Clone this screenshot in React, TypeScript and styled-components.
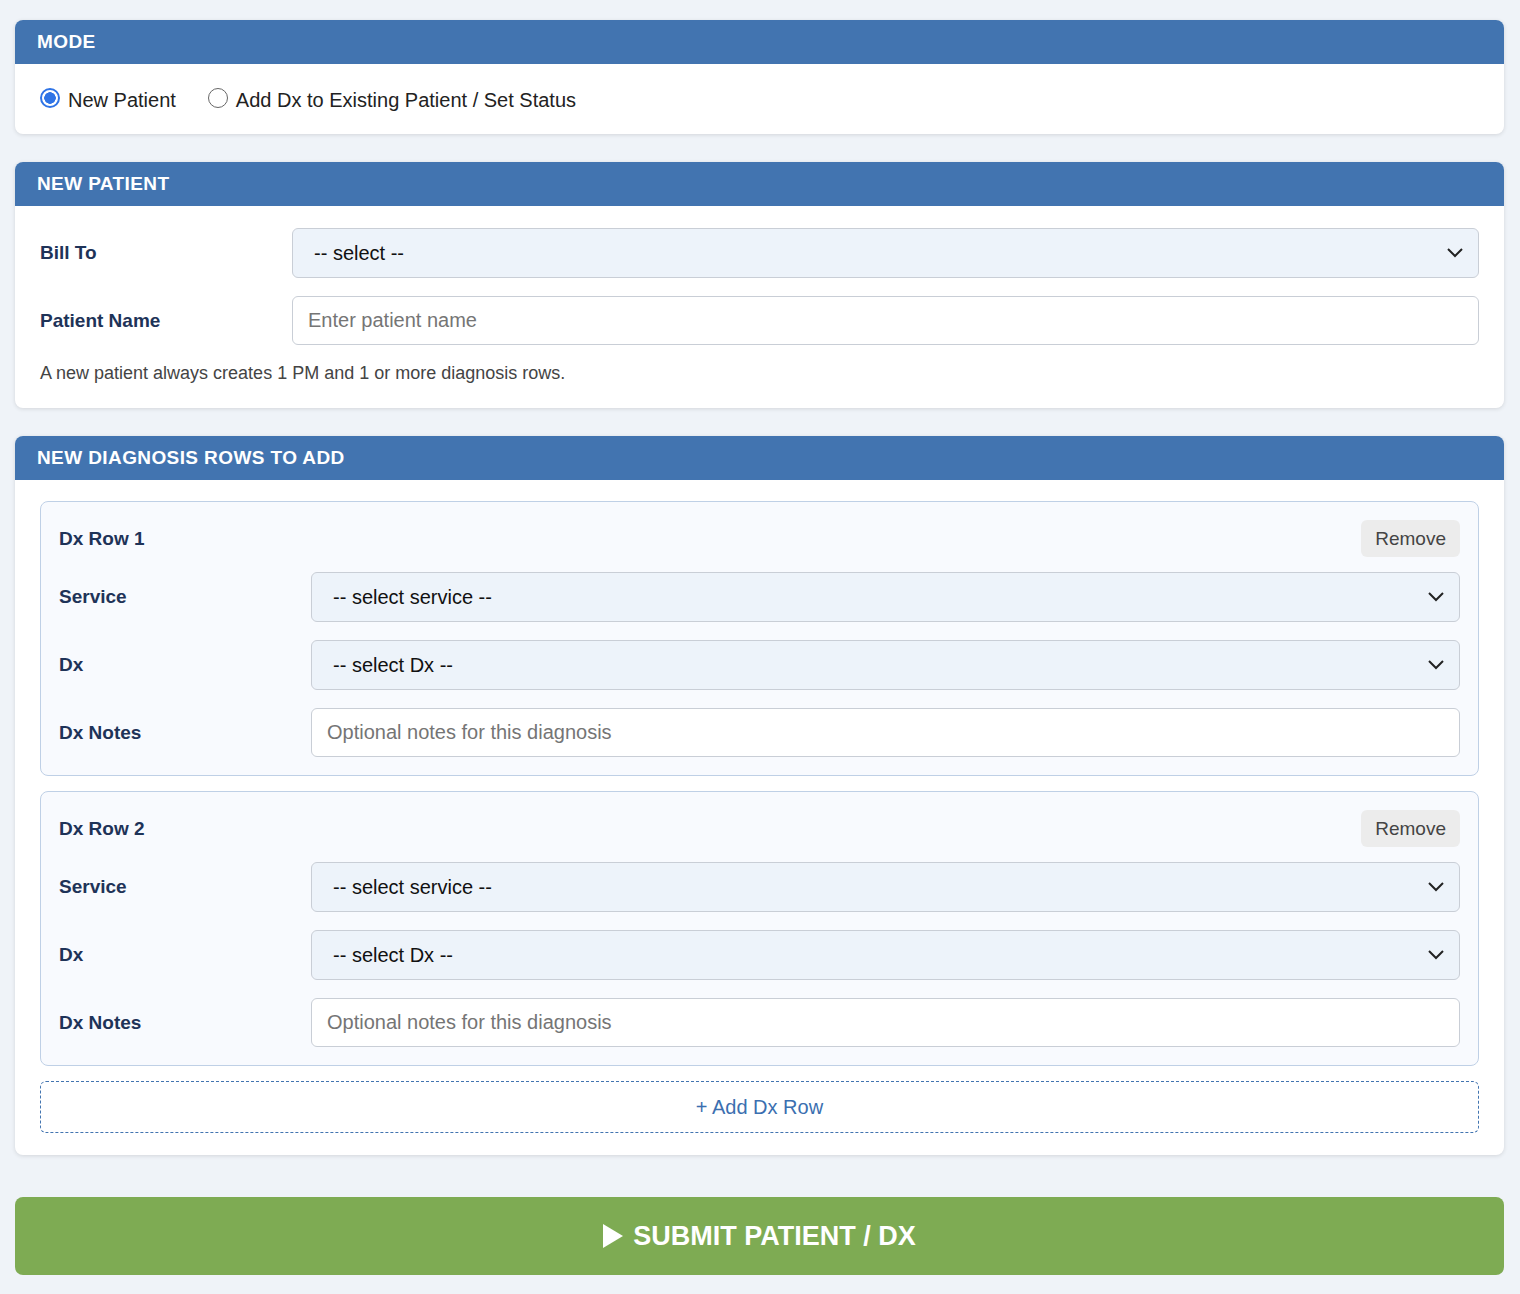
import styled, { createGlobalStyle } from 'styled-components';

const Global = createGlobalStyle`
  body {
    margin: 0;
    background: #eff3f8;
    font-family: "Liberation Sans", Arial, sans-serif;
  }
`;

const Page = styled.div`
  padding: 20px 16px 14px 15px;
  display: flex;
  flex-direction: column;
  gap: 28px;
`;

const Panel = styled.section`
  background: #fff;
  border-radius: 8px;
  box-shadow: 0 1px 4px rgba(0, 0, 0, 0.12);
  overflow: hidden;
`;

const PanelHeader = styled.div`
  background: #4274b0;
  color: #fff;
  height: 44px;
  display: flex;
  align-items: center;
  padding: 0 22px;
  font-size: 19px;
  font-weight: 700;
  letter-spacing: 0.4px;
`;

const PanelBody = styled.div<{ $pad?: string }>`
  padding: ${(p) => p.$pad || '22px 25px 24px'};
  display: flex;
  flex-direction: column;
`;

const RadioRow = styled.div`
  display: flex;
  gap: 32px;
  font-size: 20px;
  color: #222;
  height: 28px;
  margin-top: -2px;
`;

const RadioLabel = styled.label`
  display: flex;
  align-items: center;
  gap: 8px;
`;

const RadioDot = styled.span<{ $on?: boolean }>`
  width: 20px;
  height: 20px;
  border-radius: 50%;
  box-sizing: border-box;
  border: ${(p) => (p.$on ? '2px solid #2f74e6' : '1.5px solid #666')};
  background: ${(p) => (p.$on ? 'radial-gradient(circle, #2f74e6 0 5.5px, #fff 6px)' : '#fff')};
  margin-top: -4px;
`;

const FieldRow = styled.div`
  display: grid;
  grid-template-columns: 252px 1fr;
  align-items: center;
  & + & { margin-top: 18px; }
`;

const Label = styled.div`
  font-size: 19px;
  font-weight: 700;
  color: #1e3358;
`;

const Select = styled.div`
  height: 50px;
  box-sizing: border-box;
  background: #edf3fa;
  border: 1px solid #c9ced6;
  border-radius: 6px;
  display: flex;
  align-items: center;
  justify-content: space-between;
  padding: 0 14px 0 21px;
  font-size: 20px;
  color: #111;
`;

const Input = styled.div`
  height: 49px;
  box-sizing: border-box;
  background: #fff;
  border: 1px solid #c9ced6;
  border-radius: 6px;
  display: flex;
  align-items: center;
  padding: 0 15px;
  font-size: 20px;
  color: #757575;
`;

const Note = styled.div`
  margin-top: 18px;
  font-size: 18px;
  color: #444;
`;

const DxCard = styled.div`
  background: #f8fafe;
  border: 1px solid #bfd0e6;
  border-radius: 8px;
  padding: 18px 18px 18px 18px;
  margin-bottom: 15px;
`;

const DxHead = styled.div`
  display: flex;
  justify-content: space-between;
  align-items: center;
  margin-bottom: 15px;
`;

const RemoveBtn = styled.button`
  background: #ececec;
  border: none;
  border-radius: 6px;
  font-family: inherit;
  font-size: 19px;
  color: #444;
  height: 37px;
  padding: 0 14px;
`;

const AddRow = styled.button`
  height: 52px;
  border: 1px dashed #4274b0;
  border-radius: 6px;
  background: #fff;
  color: #3b6fb0;
  font-family: inherit;
  font-size: 20px;
  margin-top: 0;
`;

const Submit = styled.button`
  height: 78px;
  border: none;
  border-radius: 8px;
  background: #7eab53;
  color: #fff;
  font-family: inherit;
  font-size: 27px;
  font-weight: 700;
  display: flex;
  align-items: center;
  justify-content: center;
  gap: 10px;
  margin-top: 14px;
`;

const Chevron = () => (
  <svg width="18" height="12" viewBox="0 0 18 12">
    <path d="M2 2 L9 9 L16 2" fill="none" stroke="#222" strokeWidth="2" />
  </svg>
);

const DxRow = ({ n }: { n: number }) => (
  <DxCard>
    <DxHead>
      <Label>Dx Row {n}</Label>
      <RemoveBtn>Remove</RemoveBtn>
    </DxHead>
    <FieldRow>
      <Label>Service</Label>
      <Select>-- select service --<Chevron /></Select>
    </FieldRow>
    <FieldRow>
      <Label>Dx</Label>
      <Select>-- select Dx --<Chevron /></Select>
    </FieldRow>
    <FieldRow>
      <Label>Dx Notes</Label>
      <Input>Optional notes for this diagnosis</Input>
    </FieldRow>
  </DxCard>
);

export default function App() {
  return (
    <>
      <Global />
      <Page>
        <Panel>
          <PanelHeader>MODE</PanelHeader>
          <PanelBody $pad="24px 25px 20px">
            <RadioRow>
              <RadioLabel><RadioDot $on />New Patient</RadioLabel>
              <RadioLabel><RadioDot />Add Dx to Existing Patient / Set Status</RadioLabel>
            </RadioRow>
          </PanelBody>
        </Panel>
        <Panel>
          <PanelHeader>NEW PATIENT</PanelHeader>
          <PanelBody>
            <FieldRow>
              <Label>Bill To</Label>
              <Select>-- select --<Chevron /></Select>
            </FieldRow>
            <FieldRow>
              <Label>Patient Name</Label>
              <Input>Enter patient name</Input>
            </FieldRow>
            <Note>A new patient always creates 1 PM and 1 or more diagnosis rows.</Note>
          </PanelBody>
        </Panel>
        <Panel>
          <PanelHeader>NEW DIAGNOSIS ROWS TO ADD</PanelHeader>
          <PanelBody $pad="21px 25px 22px">
            <DxRow n={1} />
            <DxRow n={2} />
            <AddRow>+ Add Dx Row</AddRow>
          </PanelBody>
        </Panel>
        <Submit>
          <svg width="20" height="24" viewBox="0 0 20 24"><path d="M0 0 L20 12 L0 24 Z" fill="#fff" /></svg>
          SUBMIT PATIENT / DX
        </Submit>
      </Page>
    </>
  );
}
